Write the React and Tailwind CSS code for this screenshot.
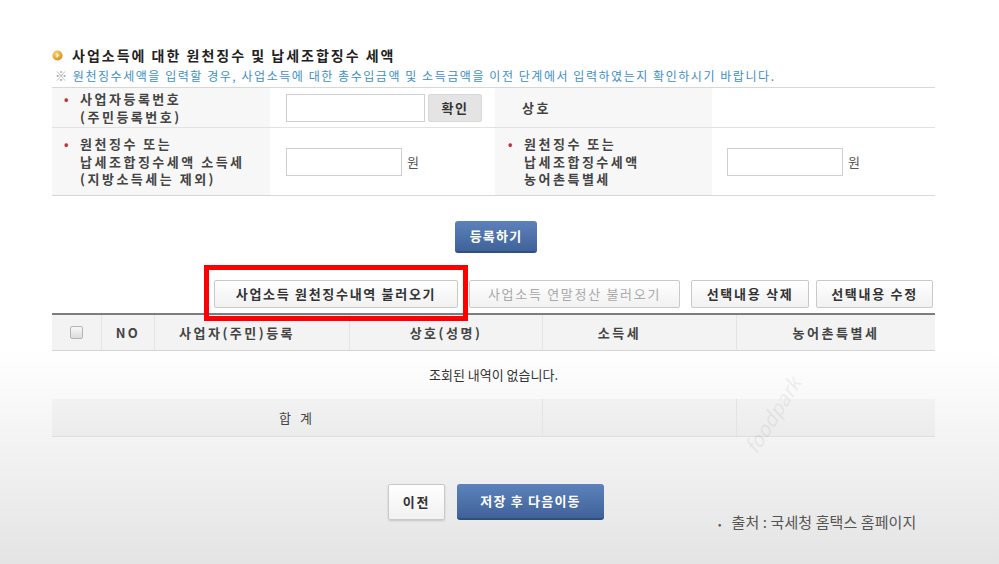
import React from "react";

const Bullet = () => (
  <svg width="11" height="11" viewBox="0 0 12 12" className="shrink-0">
    <defs>
      <radialGradient id="gold" cx="40%" cy="35%" r="70%">
        <stop offset="0%" stopColor="#ffd97a" />
        <stop offset="100%" stopColor="#d08a12" />
      </radialGradient>
    </defs>
    <circle cx="6" cy="6" r="5.5" fill="url(#gold)" />
    <path d="M5 3.6 L7.6 6 L5 8.4 Z" fill="#ffffff" />
  </svg>
);

const Req = () => <span className="text-[#c0303a] mr-[9px] text-[12px] leading-[17.5px]">•</span>;

const GrayBtn = ({ children, className = "" }) => (
  <button
    className={
      "h-[28px] px-[12px] border border-[#c9c9c9] rounded-[2px] bg-gradient-to-b from-white to-[#f1f1f1] text-[13px] font-bold tracking-[1.7px] text-[#333] " +
      className
    }
  >
    {children}
  </button>
);

const BlueBtn = ({ children, className = "" }) => (
  <button
    className={
      "rounded-[3px] bg-gradient-to-b from-[#5d82bb] to-[#3f6299] border-b-2 border-[#2f4f80] text-white text-[13px] font-bold tracking-[1.2px] " +
      className
    }
  >
    {children}
  </button>
);

export default function App() {
  return (
    <div
      className="relative w-[999px] h-[564px] overflow-hidden bg-gradient-to-b from-white via-white via-[62%] to-[#e4e4e4] text-[#333]"
      style={{ fontFamily: '"Noto Sans CJK KR", "Noto Sans", sans-serif' }}
    >
      <div className="ml-[52px] w-[883px] pt-[45px]">
        {/* title */}
        <div className="flex items-center gap-[9px] h-[20px]">
          <Bullet />
          <span className="text-[14px] leading-[20px] font-bold tracking-[2px] text-[#222]">
            사업소득에 대한 원천징수 및 납세조합징수 세액
          </span>
        </div>
        <div className="h-[22px] ml-[3px] text-[12px] leading-[22px] tracking-[1.55px] text-[#3d8fc6] whitespace-nowrap">
          <span className="text-[#999]">※</span> 원천징수세액을 입력할 경우, 사업소득에 대한 총수입금액 및 소득금액을 이전 단계에서 입력하였는지 확인하시기 바랍니다.
        </div>

        {/* form table */}
        <div className="grid grid-cols-[218px_225px_217px_223px] border-t border-[#d7d7d7] border-b text-[13px] font-bold tracking-[2.5px] text-[#444] leading-[17.5px]">
          <div className="h-[40px] bg-[#f7f7f7] border-b border-[#e2e2e2] flex items-start pt-[2px] pl-[12px]">
            <Req />
            <div>
              사업자등록번호
              <br />
              (주민등록번호)
            </div>
          </div>
          <div className="h-[40px] border-b border-[#e2e2e2] flex items-center pl-[16px] gap-[3px]">
            <div className="w-[139px] h-[28px] border border-[#cfcfcf] bg-white" />
            <div className="w-[54px] h-[28px] bg-[#e4e4e4] border border-[#d9d9d9] rounded-[2px] flex items-center justify-center tracking-[1.5px] text-[#333]">
              확인
            </div>
          </div>
          <div className="h-[40px] bg-[#f7f7f7] border-b border-[#e2e2e2] flex items-center pl-[27px]">
            상호
          </div>
          <div className="h-[40px] border-b border-[#e2e2e2]" />

          <div className="h-[67px] bg-[#f7f7f7] flex items-start pt-[7px] pl-[12px]">
            <Req />
            <div>
              원천징수 또는
              <br />
              납세조합징수세액 소득세
              <br />
              (지방소득세는 제외)
            </div>
          </div>
          <div className="h-[67px] flex items-center pl-[16px] gap-[5px]">
            <div className="w-[116px] h-[28px] border border-[#cfcfcf] bg-white" />
            <span className="font-normal text-[#555]">원</span>
          </div>
          <div className="h-[67px] bg-[#f7f7f7] flex items-start pt-[7px] pl-[13px]">
            <Req />
            <div>
              원천징수 또는
              <br />
              납세조합징수세액
              <br />
              농어촌특별세
            </div>
          </div>
          <div className="h-[67px] flex items-center pl-[15px] gap-[5px]">
            <div className="w-[116px] h-[28px] border border-[#cfcfcf] bg-white" />
            <span className="font-normal text-[#555]">원</span>
          </div>
        </div>

        {/* register */}
        <div className="flex justify-center pl-[5px] mt-[25px]">
          <BlueBtn className="w-[82px] h-[32px]">등록하기</BlueBtn>
        </div>

        {/* action buttons */}
        <div className="flex justify-end items-center mt-[27px] pr-[2px]">
          <div className="relative">
            <GrayBtn className="w-[244px]">사업소득 원천징수내역 불러오기</GrayBtn>
            <div className="absolute left-[-10px] right-[-10px] top-[-15px] bottom-[-13px] border-[5px] border-[#ff0000] pointer-events-none" />
          </div>
          <GrayBtn className="w-[211px] ml-[11px] !text-[#a9a9a9] font-normal">사업소득 연말정산 불러오기</GrayBtn>
          <GrayBtn className="w-[118px] ml-[11px]">선택내용 삭제</GrayBtn>
          <GrayBtn className="w-[117px] ml-[7px]">선택내용 수정</GrayBtn>
        </div>

        {/* list table */}
        <div className="mt-[5px] border-t-2 border-[#7d7d7d]">
          <div className="grid grid-cols-[50px_53px_195px_193px_194px_198px] h-[36px] bg-[#f3f3f3] border-b border-[#d5d5d5] text-[13px] font-bold tracking-[2.5px] text-[#444] items-center">
            <div className="h-full flex items-center justify-center border-r border-[#e4e4e4]">
              <div className="w-[13px] h-[13px] border border-[#b5b5b5] rounded-[2px] bg-gradient-to-b from-[#f8f8f8] to-[#dcdcdc]" />
            </div>
            <div className="h-full flex items-center justify-center border-r border-[#e4e4e4]">NO</div>
            <div className="h-full flex items-center pl-[24px] border-r border-[#e4e4e4]">사업자(주민)등록</div>
            <div className="h-full flex items-center justify-center border-r border-[#e4e4e4]">상호(성명)</div>
            <div className="h-full flex items-center justify-center pr-[40px] border-r border-[#e4e4e4]">소득세</div>
            <div className="h-full flex items-center justify-center">농어촌특별세</div>
          </div>
          <div className="h-[48px] flex items-center justify-center text-[13px] text-[#333]">
            조회된 내역이 없습니다.
          </div>
          <div className="grid grid-cols-[491px_194px_198px] h-[38px] bg-gradient-to-b from-[#f2f2f2] to-[#ececec] border-b border-[#dedede] text-[13px] text-[#444]">
            <div className="flex items-center justify-center tracking-[3px] border-r border-[#e3e3e3]">합 계</div>
            <div className="border-r border-[#e3e3e3]" />
            <div />
          </div>
        </div>

        {/* bottom buttons */}
        <div className="flex justify-center items-center gap-[12px] mt-[47px] pl-[5px]">
          <GrayBtn className="w-[57px] !h-[36px] !px-0 shadow-[0_1px_2px_rgba(0,0,0,0.15)]">이전</GrayBtn>
          <BlueBtn className="w-[147px] h-[36px]">저장 후 다음이동</BlueBtn>
        </div>
      </div>

      {/* caption */}
      <div className="absolute left-[718px] top-[511px] text-[15px] leading-[22px] text-[#555] tracking-[0.1px]">
        <span className="text-[10px] mr-[10px] align-middle">•</span>출처 : 국세청 홈택스 홈페이지
      </div>

      {/* watermark */}
      <div className="absolute left-[730px] top-[400px] -rotate-[58deg] text-[20px] italic text-[#000] opacity-[0.05] pointer-events-none">
        foodpark
      </div>
    </div>
  );
}
